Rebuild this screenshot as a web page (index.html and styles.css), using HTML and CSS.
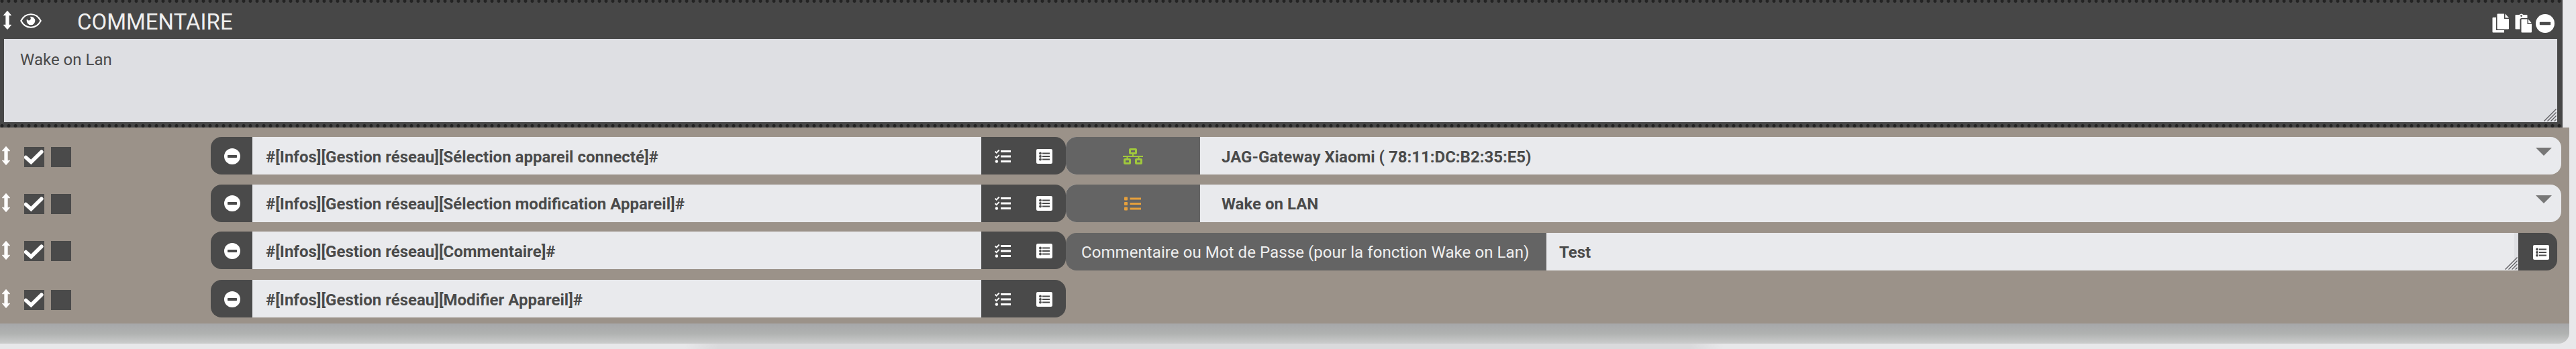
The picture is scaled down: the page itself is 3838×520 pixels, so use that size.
FILE: index.html
```html
<!DOCTYPE html>
<html lang="fr">
<head>
<meta charset="utf-8">
<title>Commentaire</title>
<link rel="stylesheet" href="styles.css">
</head>
<body>
<svg class="defs" width="0" height="0">
  <symbol id="move" viewBox="0 0 12 28"><path d="M6 .3 11.700 6.800H8.200V21.200H11.700L6 27.700 .3 21.200H3.800V6.800H.3z" fill="#fff" stroke="#fff" stroke-width=".8" stroke-linejoin="round"/></symbol>
  <symbol id="eye" viewBox="0 0 32 22"><path d="M1.300 11C8-2 24-2 30.700 11 24 24 8 24 1.300 11z" fill="none" stroke="#fff" stroke-width="2.200" stroke-linejoin="round"/><circle cx="16" cy="11" r="6.300" fill="#fff"/><circle cx="13" cy="7.600" r="2.800" fill="#474747"/></symbol>
  <symbol id="minus" viewBox="0 0 24 24"><circle cx="12" cy="12" r="12" fill="#fff"/><rect x="5" y="10" width="14" height="4" rx=".7" fill="#4a4a4a"/></symbol>
  <symbol id="check" viewBox="0 0 30 30"><path d="M2.500 15.500 10.300 22.500 25.800 7.200" fill="none" stroke="#fff" stroke-width="5.600" stroke-linejoin="miter" stroke-linecap="round"/></symbol>
  <symbol id="tasks" viewBox="0 0 24 20"><g fill="none" stroke="#fff"><path d="M9 2.500H24M9 10H24M9 17.500H24" stroke-width="3"/><path d="M.6 2.700 2.700 4.700 6.700.5M.6 10.200 2.700 12.200 6.700 7.900" stroke-width="2"/></g><circle cx="2.900" cy="17.500" r="2.200" fill="#fff"/></symbol>
  <symbol id="listbox" viewBox="0 0 24 22"><rect width="24" height="22" rx="2.200" fill="#fff"/><path d="M9 6.500H20M9 11H20M9 15.500H20" stroke="#4a4a4a" stroke-width="2.200"/><g fill="#4a4a4a"><circle cx="6" cy="6.500" r="1.900"/><circle cx="6" cy="11" r="1.900"/><circle cx="6" cy="15.500" r="1.900"/></g></symbol>
  <symbol id="net" viewBox="0 0 30 24"><g fill="none" stroke="#a0c83c" stroke-width="3"><rect x="10.500" y="1.500" width="9" height="6" rx=".5"/><rect x="2.500" y="16.500" width="8" height="6" rx=".5"/><rect x="19.500" y="16.500" width="8" height="6" rx=".5"/><path d="M0 12H30" stroke-width="2"/><path d="M15 8V12M6.500 12V16M23.500 12V16" stroke-width="2"/></g></symbol>
  <symbol id="list" viewBox="0 0 25 21"><path d="M8.500 3H25M8.500 10.500H25M8.500 18H25" stroke="#e6a03c" stroke-width="3"/><g fill="#e6a03c"><rect y=".5" width="5" height="5" rx="1"/><rect y="8" width="5" height="5" rx="1"/><rect y="15.500" width="5" height="5" rx="1"/></g></symbol>
  <symbol id="copy" viewBox="0 0 26 30"><path d="M1.500 6H6V25H18V28.500H1.500Q.5 28.500.5 27.500V7Q.5 6 1.500 6z" fill="#fff"/><path d="M8.500.5H18V8H25V22.500Q25 23.500 24 23.500H8.500Q7.500 23.500 7.500 22.500V1.500Q7.500.5 8.500.5zM19.500.5 25 6.500H19.500z" fill="#fff"/></symbol>
  <symbol id="paste" viewBox="0 0 26 30"><path d="M1.500 2H6.500Q9.500-1 12.500 2H17.500Q18.500 2 18.500 3V7H10Q7.500 7 7.500 9.500V23.500H1.500Q.5 23.500.5 22.500V3Q.5 2 1.500 2z" fill="#fff"/><circle cx="9.500" cy="3.600" r="1.300" fill="#474747"/><path d="M10.500 8.500H18.500V16H25V27.500Q25 28.500 24 28.500H10.500Q9.500 28.500 9.500 27.500V9.500Q9.500 8.500 10.500 8.500zM20 8.800 25 14.500H20z" fill="#fff"/></symbol>
  <symbol id="grip" viewBox="0 0 19 19"><path d="M.5 18.500 18.500.5M5.500 18.500 18.500 5.500M10.500 18.500 18.500 10.500M15.800 18.500 18.500 15.800" stroke="#5c5c60" stroke-width="1.300"/></symbol>
  <symbol id="caret" viewBox="0 0 24 12"><path d="M0 0H24L12 12z" fill="#777"/></symbol>
</svg>

<main class="panel">
  <section class="comment">
    <div class="dots dots-top"></div>
    <header class="comment-head">
      <svg class="move"><use href="#move"/></svg>
      <svg class="eye"><use href="#eye"/></svg>
      <h1 class="title">COMMENTAIRE</h1>
      <div class="tools">
        <svg class="tool-copy"><use href="#copy"/></svg>
        <svg class="tool-paste"><use href="#paste"/></svg>
        <svg class="tool-minus"><use href="#minus"/></svg>
      </div>
    </header>
    <div class="textarea"><span class="note">Wake on Lan</span><svg class="grip"><use href="#grip"/></svg></div>
    <div class="dots dots-bottom"></div>
  </section>

  <section class="rows">
    <div class="row">
      <svg class="move"><use href="#move"/></svg>
      <span class="box"><svg class="check"><use href="#check"/></svg></span><span class="box"></span>
      <div class="command">
        <span class="remove"><svg class="minus"><use href="#minus"/></svg></span>
        <span class="input">#[Infos][Gestion réseau][Sélection appareil connecté]#</span>
        <span class="buttons"><svg class="tasks"><use href="#tasks"/></svg><svg class="listbox"><use href="#listbox"/></svg></span>
      </div>
      <div class="option">
        <span class="kind"><svg class="net"><use href="#net"/></svg></span>
        <span class="select">JAG-Gateway Xiaomi ( 78:11:DC:B2:35:E5)</span>
        <svg class="caret"><use href="#caret"/></svg>
      </div>
    </div>
    <div class="row row-2">
      <svg class="move"><use href="#move"/></svg>
      <span class="box"><svg class="check"><use href="#check"/></svg></span><span class="box"></span>
      <div class="command">
        <span class="remove"><svg class="minus"><use href="#minus"/></svg></span>
        <span class="input">#[Infos][Gestion réseau][Sélection modification Appareil]#</span>
        <span class="buttons"><svg class="tasks"><use href="#tasks"/></svg><svg class="listbox"><use href="#listbox"/></svg></span>
      </div>
      <div class="option">
        <span class="kind"><svg class="list"><use href="#list"/></svg></span>
        <span class="select">Wake on LAN</span>
        <svg class="caret"><use href="#caret"/></svg>
      </div>
    </div>
    <div class="row row-3">
      <svg class="move"><use href="#move"/></svg>
      <span class="box"><svg class="check"><use href="#check"/></svg></span><span class="box"></span>
      <div class="command">
        <span class="remove"><svg class="minus"><use href="#minus"/></svg></span>
        <span class="input">#[Infos][Gestion réseau][Commentaire]#</span>
        <span class="buttons"><svg class="tasks"><use href="#tasks"/></svg><svg class="listbox"><use href="#listbox"/></svg></span>
      </div>
      <div class="message">
        <span class="label">Commentaire ou Mot de Passe (pour la fonction Wake on Lan)</span>
        <span class="value">Test<svg class="grip"><use href="#grip"/></svg></span>
        <span class="pick"><svg class="listbox"><use href="#listbox"/></svg></span>
      </div>
    </div>
    <div class="row row-4">
      <svg class="move"><use href="#move"/></svg>
      <span class="box"><svg class="check"><use href="#check"/></svg></span><span class="box"></span>
      <div class="command">
        <span class="remove"><svg class="minus"><use href="#minus"/></svg></span>
        <span class="input">#[Infos][Gestion réseau][Modifier Appareil]#</span>
        <span class="buttons"><svg class="tasks"><use href="#tasks"/></svg><svg class="listbox"><use href="#listbox"/></svg></span>
      </div>
    </div>
  </section>
  <div class="shade"></div>
</main>
<div class="glow"></div>
</body>
</html>
```
FILE: styles.css
```css
* { box-sizing: border-box; }
body {
  margin: 0;
  width: 3838px;
  height: 520px;
  overflow: hidden;
  background: #e8e8ea;
  color: #4a4a4a;
  font: 24px/56px Roboto, sans-serif;
}
svg { display: block; flex: none; }
.defs { position: absolute; }
.panel { width: 3828px; height: 512px; }
.comment { width: 3818px; height: 190px; background: #474747; display: flex; flex-direction: column; }
.dots {
  flex: none;
  height: 5px;
  background: radial-gradient(circle at 3px 2.500px, #232323 2.100px, transparent 2.900px) 0 0 / 10px 5px repeat-x;
}
.dots-top { height: 4px; background-position: 0 -1px; }
.dots-bottom { margin-top: 3px; }
.comment-head { height: 54px; display: flex; align-items: flex-start; padding: 12px 12px 0 5px; }
.move { width: 12px; height: 28px; }
.eye { width: 32px; height: 22px; margin: 4px 0 0 13px; }
.title { margin: 1px 0 0 53px; font-size: 33px; font-weight: 400; line-height: 32px; color: #efefef; }
.tools { display: flex; margin: 4px 0 0 auto; }
.tool-copy { width: 26px; height: 30px; }
.tool-paste { width: 26px; height: 30px; margin-left: 8px; }
.tool-minus { width: 28px; height: 28px; margin: 1px 0 0 5px; }
.textarea { width: 3804px; height: 124px; margin-left: 6px; background: #dedfe3; position: relative; }
.note { display: block; padding: 15px 24px; font-size: 24px; line-height: 32px; }
.grip { position: absolute; right: 1px; bottom: 1px; width: 19px; height: 19px; }
.rows { height: 292px; padding-top: 14px; background: #9b9289; }
.row { display: flex; height: 56px; padding-left: 3px; margin-bottom: 15px; }
.row .move { margin: 14px 21px 0 0; }
.box { flex: none; width: 30px; height: 30px; margin: 15px 10px 0 0; background: #4a4a4a; }
.check { width: 30px; height: 30px; }
.command { width: 1274px; margin-left: 198px; display: flex; border-radius: 16px; overflow: hidden; background: #4a4a4a; }
.remove { width: 62px; padding: 17px 0 0 20px; }
.minus { width: 24px; height: 24px; }
.input { width: 1086px; padding-left: 20px; line-height: 60px; background: #e9eaed; font-weight: 700; white-space: nowrap; }
.buttons { width: 126px; display: flex; padding: 18px 0 0 20px; }
.tasks { width: 24px; height: 20px; margin-top: 1px; }
.listbox { width: 24px; height: 22px; margin-left: 38px; }
.option { width: 2228px; display: flex; border-radius: 16px; overflow: hidden; background: #e9eaed; position: relative; }
.kind { width: 200px; background: #646464; padding: 17px 0 0 85px; }
.net { width: 30px; height: 24px; }
.list { width: 25px; height: 21px; margin: 1px 0 0 2px; }
.select { padding-left: 32px; line-height: 60px; font-weight: 700; white-space: nowrap; }
.caret { position: absolute; right: 14px; top: 16px; width: 24px; height: 12px; }
.message { width: 2222px; height: 56px; margin-top: 2px; display: flex; border-radius: 16px; overflow: hidden; line-height: 59px; }
.label { width: 716px; padding-left: 23px; background: #646464; color: #efefef; letter-spacing: .08px; white-space: nowrap; }
.value { width: 1448px; padding-left: 19px; background: #e9eaed; border-right: 6px solid #dedfe3; font-weight: 700; position: relative; }
.value .grip { right: -5px; }
.pick { width: 58px; background: #4a4a4a; padding-top: 18px; }
.pick .listbox { margin-left: 22px; }
.row-2 { margin-bottom: 14px; }
.row-2 .box, .row-3 .box { margin-top: 14px; }
.row-2 .move { margin-top: 13px; }
.row-2 .remove { padding-top: 16px; }
.row-2 .buttons { padding-top: 17px; }
.row-2 .input, .row-2 .select { line-height: 58px; }
.row-3 { margin-bottom: 16px; }
.row-3 .check { margin-top: 1px; }
.shade { height: 30px; border-radius: 0 0 16px 0; background: linear-gradient(#a6a7a9, #b0b2b1 50%, #cbcccc); }
.glow { height: 8px; margin: 0 1270px 0 1020px; background: linear-gradient(90deg, #dadadc00, #dadadc 50px, #dadadc calc(100% - 50px), #dadadc00); }
```
